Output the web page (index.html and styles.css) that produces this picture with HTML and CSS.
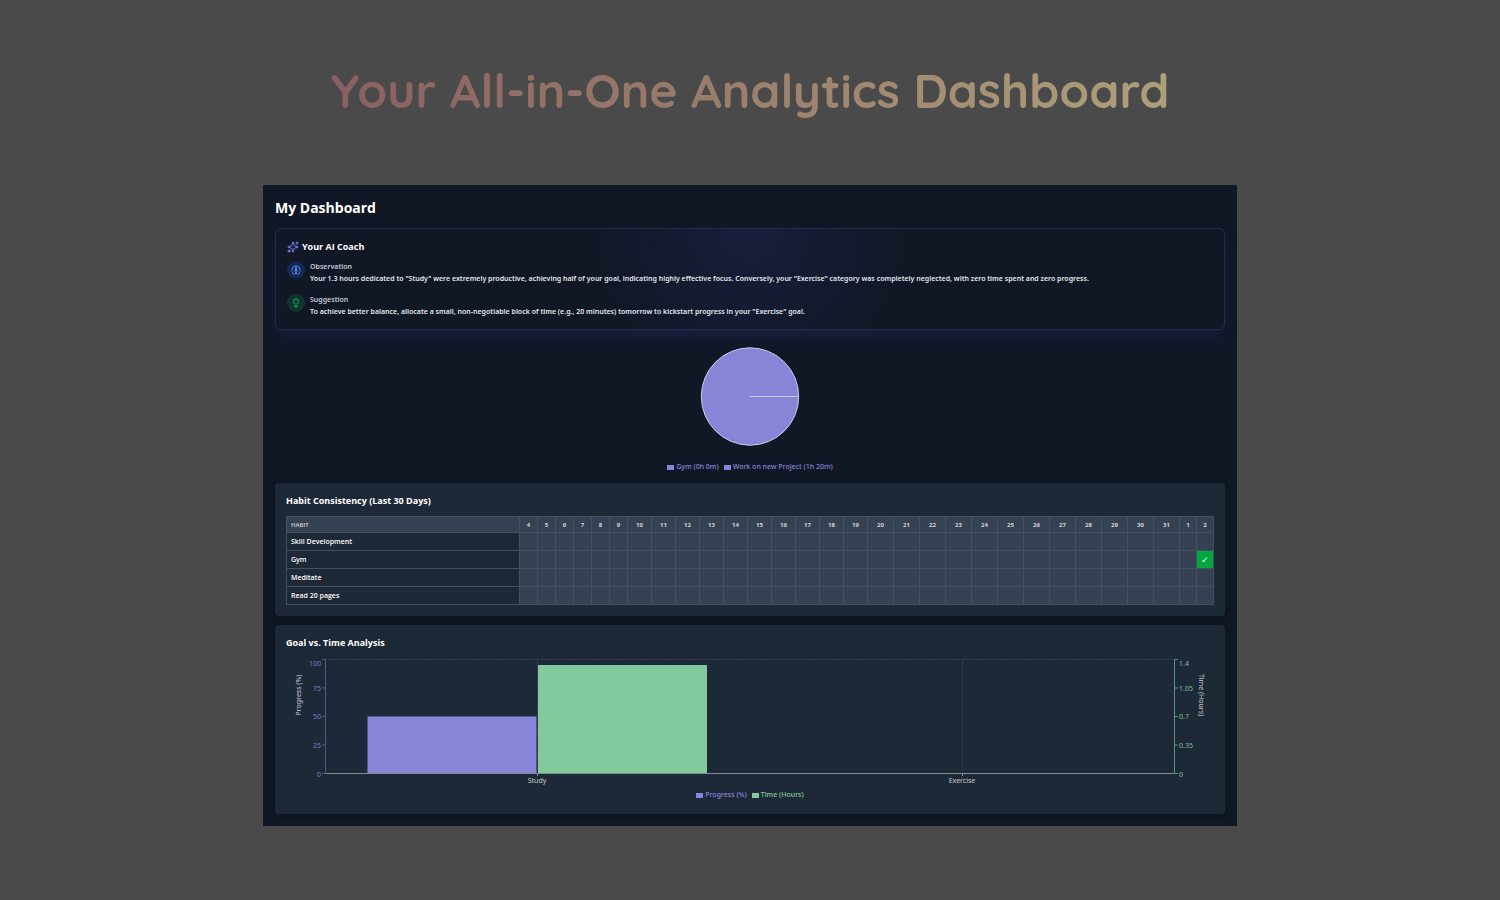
FILE: index.html
```html
<!DOCTYPE html>
<html lang="en">
<head>
    <meta charset="UTF-8">
    <meta name="viewport" content="width=device-width, initial-scale=1.0">
    <title>Analytics Dashboard</title>
    <link rel="stylesheet" href="styles.css">
</head>
<body>
    <h1 class="hero-title">Your All-in-One Analytics Dashboard</h1>

    <main class="dashboard">
        <h2 class="dashboard-title">My Dashboard</h2>

        <section class="coach">
            <h3 class="coach-title">
                <svg class="sparkles" viewBox="0 0 24 24" aria-hidden="true">
                    <path d="M11 2.8a1 1 0 0 1 2 0l1.05 5.56a2 2 0 0 0 1.6 1.6l5.55 1.04a1 1 0 0 1 0 2l-5.56 1.05a2 2 0 0 0-1.6 1.6L13 21.2a1 1 0 0 1-2 0l-1.05-5.56a2 2 0 0 0-1.6-1.6L2.8 13a1 1 0 0 1 0-2l5.56-1.05a2 2 0 0 0 1.6-1.6z"/>
                    <path d="M20 2v4M22 4h-4"/>
                    <circle cx="4" cy="20" r="2"/>
                </svg>
                Your AI Coach
            </h3>
            <div class="insight">
                <span class="badge badge-blue">
                    <svg viewBox="0 0 24 24" aria-hidden="true">
                        <path d="M12 5a3 3 0 1 0-5.997.125 4 4 0 0 0-2.526 5.77 4 4 0 0 0 .556 6.588A4 4 0 1 0 12 18Z"/>
                        <path d="M12 5a3 3 0 1 1 5.997.125 4 4 0 0 1 2.526 5.77 4 4 0 0 1-.556 6.588A4 4 0 1 1 12 18Z"/>
                        <path d="M15 13a4.5 4.5 0 0 1-3-4 4.5 4.5 0 0 1-3 4"/>
                    </svg>
                </span>
                <div>
                    <h4>Observation</h4>
                    <p>Your 1.3 hours dedicated to "Study" were extremely productive, achieving half of your goal, indicating highly effective focus. Conversely, your "Exercise" category was completely neglected, with zero time spent and zero progress.</p>
                </div>
            </div>
            <div class="insight">
                <span class="badge badge-green">
                    <svg viewBox="0 0 24 24" aria-hidden="true">
                        <path d="M15 14c.2-1 .7-1.7 1.5-2.5 1-.9 1.5-2.2 1.5-3.5A6 6 0 0 0 6 8c0 1 .2 2.2 1.5 3.5.7.7 1.3 1.5 1.5 2.5"/>
                        <path d="M9 18h6M10 22h4"/>
                    </svg>
                </span>
                <div>
                    <h4>Suggestion</h4>
                    <p>To achieve better balance, allocate a small, non-negotiable block of time (e.g., 20 minutes) tomorrow to kickstart progress in your "Exercise" goal.</p>
                </div>
            </div>
        </section>

        <section class="pie-section">
            <svg class="pie" viewBox="0 0 100 100" role="img" aria-label="Time per habit">
                <circle cx="50" cy="49.5" r="48.7"/>
                <path d="M50 49.5h48.7"/>
            </svg>
            <ul class="legend">
                <li class="purple">Gym (0h 0m)</li>
                <li class="purple">Work on new Project (1h 20m)</li>
            </ul>
        </section>

        <section class="card">
            <h3>Habit Consistency (Last 30 Days)</h3>
            <table class="habits">
                <colgroup>
                    <col>
                    <col span="6" class="col-s">
                    <col span="10" class="col-m">
                    <col span="12" class="col-l">
                    <col span="2" class="col-xs">
                </colgroup>
                <thead>
                    <tr id="days"><th scope="col">HABIT</th></tr>
                </thead>
                <tbody id="habitRows"></tbody>
            </table>
        </section>

        <section class="card">
            <h3>Goal vs. Time Analysis</h3>
            <svg class="chart" viewBox="0 0 928 132" role="img" aria-label="Goal progress and time spent">
                <!-- grid -->
                <path class="grid" d="M39 5.5H889M251.5 5V120M676.5 5V120"/>

                <!-- bars -->
                <rect class="bar-purple" x="81.5" y="62.5" width="169" height="57.5"/>
                <rect class="bar-green" x="252" y="11" width="169" height="109"/>

                <!-- x axis -->
                <path class="axis-x" d="M39 119.5H889M251.5 119V122M676.5 119V122"/>
                <g class="label-x">
                    <text x="251" y="129">Study</text>
                    <text x="676" y="129">Exercise</text>
                </g>

                <!-- left axis -->
                <path class="axis-left" d="M36 5.5h3.5v114H36M36 34h3M36 62.5h3M36 91h3"/>
                <g class="label-left">
                    <text x="35" y="12">100</text>
                    <text x="35" y="37">75</text>
                    <text x="35" y="65">50</text>
                    <text x="35" y="94">25</text>
                    <text x="35" y="123">0</text>
                </g>
                <text class="label-axis" transform="translate(15 41) rotate(-90)">Progress (%)</text>

                <!-- right axis -->
                <path class="axis-right" d="M892 5.5h-3.5v114h3.5M889 34h3M889 62.5h3M889 91h3"/>
                <g class="label-right">
                    <text x="893" y="12">1.4</text>
                    <text x="893" y="37">1.05</text>
                    <text x="893" y="65">0.7</text>
                    <text x="893" y="94">0.35</text>
                    <text x="893" y="123">0</text>
                </g>
                <text class="label-axis" transform="translate(913 41) rotate(90)">Time (Hours)</text>
            </svg>
            <ul class="legend">
                <li class="purple">Progress (%)</li>
                <li class="green">Time (Hours)</li>
            </ul>
        </section>
    </main>

    <script src="script.js"></script>
</body>
</html>
```
FILE: styles.css
```css
* {
    margin: 0;
    padding: 0;
    box-sizing: border-box;
}

body {
    font-family: 'Segoe UI', 'Open Sans', sans-serif;
    background: #4a4a4a;
    color: #ffffff;
    min-height: 100vh;
    padding: 55px 20px 74px;
    font-size: 7px;
    line-height: 12px;
}

.hero-title {
    width: fit-content;
    margin: 0 auto 60px;
    font-family: Quicksand, Lato, sans-serif;
    font-size: 48px;
    font-weight: 700;
    line-height: 70px;
    text-align: center;
    color: transparent;
    background: linear-gradient(90deg, #896060, #aea07a);
    -webkit-background-clip: text;
    background-clip: text;
}

.dashboard {
    max-width: 974px;
    margin: 0 auto;
    padding: 12px;
    background: #101725;
}

.dashboard-title {
    font-size: 14px;
    line-height: 22px;
    margin-bottom: 9px;
}

h3 {
    font-size: 9px;
    line-height: 14px;
}

/* AI coach */
.coach {
    padding: 11px;
    border: 1px solid #242d45;
    border-radius: 6px;
    background: radial-gradient(circle at 50% 0, #191e3c, #101725 160px);
    box-shadow: 0 8px 18px -4px rgba(49, 46, 129, 0.4);
}

.coach-title {
    display: flex;
    align-items: center;
    gap: 3px;
    margin-bottom: 7px;
}

.coach svg {
    fill: none;
    stroke: currentColor;
    stroke-width: 2;
    stroke-linecap: round;
    stroke-linejoin: round;
}

.sparkles {
    width: 12px;
    height: 12px;
    color: #7c86ff;
}

.insight {
    display: flex;
    gap: 5px;
    font-family: 'Segoe UI', 'Noto Sans', sans-serif;
}

.insight + .insight {
    margin-top: 9px;
}

.insight h4 {
    font-size: 7px;
    font-weight: 600;
    color: #c5cad3;
}

.insight p {
    font-weight: 600;
    color: #e5e7eb;
}

.badge {
    flex: none;
    display: flex;
    align-items: center;
    justify-content: center;
    width: 18px;
    height: 18px;
    border-radius: 50%;
}

.badge svg {
    width: 10px;
    height: 10px;
}

.badge-blue {
    background: #152655;
    color: #51a2ff;
}

.badge-green {
    background: #11352d;
    color: #05df72;
}

/* Pie */
.pie-section {
    padding: 17px 0 10px;
}

.pie {
    display: block;
    width: 100px;
    height: 100px;
    margin: 0 auto 14px;
    fill: #8884d8;
    stroke: #cccae6;
}

.legend {
    display: flex;
    justify-content: center;
    gap: 5px;
    list-style: none;
    font-family: 'Segoe UI', 'Noto Sans', sans-serif;
    font-weight: 500;
}

.legend li {
    display: flex;
    align-items: center;
    gap: 2px;
}

.legend li::before {
    content: '';
    width: 7px;
    height: 5px;
    background: currentColor;
}

.purple {
    color: #8884d8;
}

.green {
    color: #82ca9d;
}

/* Cards */
.card {
    padding: 11px;
    border-radius: 4px;
    background: #1e2938;
    box-shadow: 0 2px 6px rgba(0, 0, 0, 0.2);
}

.card + .card {
    margin-top: 9px;
}

/* Habit table */
.habits {
    width: 100%;
    margin-top: 8px;
    border-collapse: collapse;
    table-layout: fixed;
}

.col-xs {
    width: 17px;
}

.col-s {
    width: 18px;
}

.col-m {
    width: 24px;
}

.col-l {
    width: 26px;
}

.habits th,
.habits td {
    height: 18px;
    border: 1px solid #45505f;
    text-align: center;
    line-height: 10px;
}

.habits td {
    background: #364153;
}

.habits thead th {
    height: 16px;
    background: #364153;
    color: #d1d5dc;
    font-size: 6px;
}

.habits th:first-child {
    padding-left: 4px;
    text-align: left;
    font-weight: 600;
}

.habits .done {
    background: #00a63e;
    font-size: 9px;
}

/* Bar chart */
.chart {
    display: block;
    width: 100%;
    margin: 4px 0 3px;
    font-family: 'Segoe UI', 'Noto Sans', sans-serif;
}

.card .legend {
    margin-bottom: 2px;
}

.chart path {
    fill: none;
}

.chart .grid {
    stroke: #35404c;
    stroke-dasharray: 2 1;
}

.bar-purple {
    fill: #8884d8;
}

.bar-green {
    fill: #82ca9d;
}

.axis-x {
    stroke: #858b93;
}

.axis-left {
    stroke: #56568e;
}

.axis-right {
    stroke: #5c9479;
}

.label-x,
.label-axis {
    fill: #c5c8cd;
    text-anchor: middle;
}

.label-left {
    fill: #7f7bcb;
    text-anchor: end;
}

.label-right {
    fill: #7cc096;
}
```
FILE: script.js
```js
const days = [];
for (let d = 4; d <= 31; d++) days.push(d);
days.push(1, 2);

// days on which each habit was completed
const habits = [
    { name: 'Skill Development', done: [] },
    { name: 'Gym', done: [2] },
    { name: 'Meditate', done: [] },
    { name: 'Read 20 pages', done: [] }
];

const head = document.getElementById('days');
days.forEach(day => {
    const th = document.createElement('th');
    th.scope = 'col';
    th.textContent = day;
    head.appendChild(th);
});

const body = document.getElementById('habitRows');
habits.forEach(habit => {
    const row = body.insertRow();
    const th = document.createElement('th');
    th.scope = 'row';
    th.textContent = habit.name;
    row.appendChild(th);
    days.forEach(day => {
        const cell = row.insertCell();
        if (habit.done.includes(day)) {
            cell.className = 'done';
            cell.textContent = '✓';
        }
    });
});
```
